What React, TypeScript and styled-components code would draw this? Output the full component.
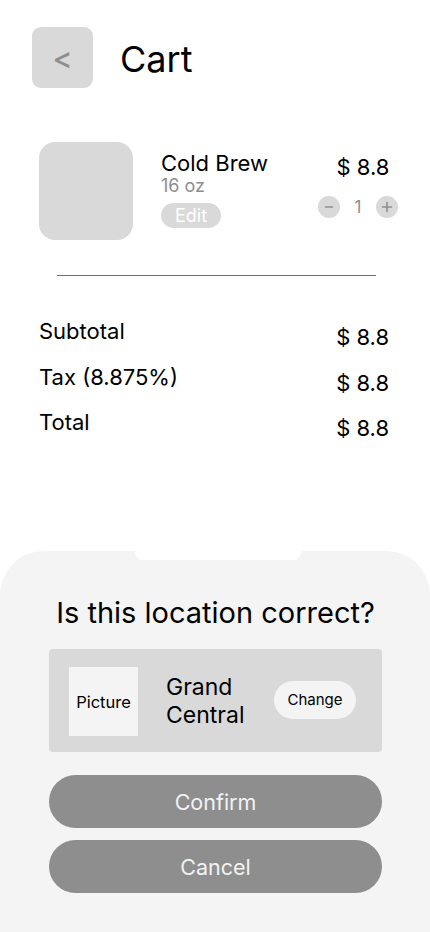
import React from "react";
import styled, { createGlobalStyle } from "styled-components";

const Global = createGlobalStyle`
  html, body { margin: 0; padding: 0; background: #ffffff; }
  body { font-family: Inter, "Noto Sans", sans-serif; color: #000; }
  * { box-sizing: border-box; }
`;

const Page = styled.div`
  width: 430px;
  height: 932px;
  display: flex;
  flex-direction: column;
  background: #ffffff;
  overflow: hidden;
`;

const Header = styled.header`
  display: flex;
  align-items: center;
  gap: 27px;
  padding: 27px 0 0 32px;
`;

const BackButton = styled.button`
  width: 61px;
  height: 61px;
  border: none;
  border-radius: 9px;
  background: #d9d9d9;
  color: #8e8e8e;
  font-family: Inter, sans-serif;
  font-size: 30px;
  font-weight: 500;
  line-height: 1;
  display: flex;
  align-items: center;
  justify-content: center;
  padding: 1px 0 0 0;
`;

const Title = styled.h1`
  margin: 0;
  font-size: 36px;
  font-weight: 400;
  line-height: 42px;
  padding-top: 2px;
`;

const ProductRow = styled.section`
  display: flex;
  margin-top: 54px;
  padding-left: 39px;
  padding-right: 32px;
`;

const Thumb = styled.div`
  width: 94px;
  height: 98px;
  border-radius: 16px;
  background: #d9d9d9;
  flex-shrink: 0;
`;

const Info = styled.div`
  display: flex;
  flex-direction: column;
  align-items: flex-start;
  margin-left: 28px;
  padding-top: 8px;
  flex: 1;
`;

const ProductName = styled.div`
  font-size: 22px;
  line-height: 26px;
`;

const Size = styled.div`
  font-size: 18px;
  line-height: 20px;
  color: #8e8e8e;
`;

const EditPill = styled.button`
  margin-top: 7px;
  height: 25px;
  padding: 0 14px;
  border: none;
  border-radius: 13px;
  background: #d9d9d9;
  color: #ffffff;
  font-family: Inter, sans-serif;
  font-size: 18px;
  line-height: 25px;
`;

const PriceCol = styled.div`
  display: flex;
  flex-direction: column;
  align-items: center;
  padding-top: 11px;
`;

const Price = styled.div`
  font-size: 22px;
  line-height: 28px;
  margin-left: 10px;
`;

const Stepper = styled.div`
  display: flex;
  align-items: center;
  margin-top: 15px;
`;

const StepBtn = styled.span`
  width: 22px;
  height: 22px;
  border-radius: 50%;
  background: #d9d9d9;
  display: flex;
  align-items: center;
  justify-content: center;
`;

const Qty = styled.span`
  width: 36px;
  text-align: center;
  font-size: 17px;
  color: #8e8e8e;
  line-height: 22px;
`;

const Divider = styled.hr`
  margin: 35px 54px 0 57px;
  border: none;
  border-top: 1px solid #6e6e6e;
  height: 0;
`;

const Summary = styled.section`
  display: flex;
  flex-direction: column;
  margin-top: 42px;
  padding: 0 41px 0 39px;
`;

const SumRow = styled.div`
  display: flex;
  justify-content: space-between;
  align-items: flex-start;
  height: 45.5px;
`;

const SumLabel = styled.span`
  font-size: 22px;
  line-height: 26px;
`;

const SumValue = styled.span`
  font-size: 22px;
  line-height: 28px;
  padding-top: 5px;
`;

const Sheet = styled.section`
  margin-top: auto;
  height: 381px;
  position: relative;
  background: #f4f4f4;
  border-radius: 44px 44px 0 0;
  display: flex;
  flex-direction: column;
  padding: 45px 48px 0 49px;
`;

const Notch = styled.div`
  position: absolute;
  top: 0;
  left: 135px;
  width: 166px;
  height: 9px;
  background: #ffffff;
  border-radius: 0 0 8px 8px;
`;

const SheetTitle = styled.h2`
  margin: 0;
  text-align: center;
  font-size: 29px;
  font-weight: 400;
  line-height: 34px;
`;

const LocationCard = styled.div`
  margin-top: 19px;
  height: 103px;
  border-radius: 4px;
  background: #d9d9d9;
  display: flex;
  align-items: center;
  padding: 2px 26px 0 20px;
`;

const Picture = styled.div`
  width: 69px;
  height: 69px;
  background: #f4f4f4;
  display: flex;
  align-items: center;
  justify-content: center;
  font-size: 16.5px;
  flex-shrink: 0;
`;

const PlaceName = styled.div`
  flex: 1;
  margin-left: 28px;
  font-size: 23px;
  line-height: 28px;
  margin-top: -2px;
`;

const ChangeBtn = styled.button`
  width: 82px;
  height: 38px;
  border: none;
  border-radius: 19px;
  background: #f4f4f4;
  font-family: Inter, sans-serif;
  font-size: 15px;
  color: #000;
  padding: 0;
  margin-top: -4px;
`;

const Actions = styled.div`
  display: flex;
  flex-direction: column;
  gap: 12px;
  margin-top: 23px;
`;

const ActionBtn = styled.button`
  height: 53px;
  border: none;
  border-radius: 27px;
  background: #8e8e8e;
  color: #f2f2f2;
  font-family: Inter, sans-serif;
  font-size: 21.5px;
  padding: 0;
`;

const Minus = () => (
  <svg width="10" height="10" viewBox="0 0 10 10">
    <line x1="1.5" y1="5" x2="8.5" y2="5" stroke="#8e8e8e" strokeWidth="1.6" strokeLinecap="round" />
  </svg>
);

const Plus = () => (
  <svg width="12" height="12" viewBox="0 0 12 12">
    <line x1="1.5" y1="6" x2="10.5" y2="6" stroke="#8e8e8e" strokeWidth="1.6" strokeLinecap="round" />
    <line x1="6" y1="1.5" x2="6" y2="10.5" stroke="#8e8e8e" strokeWidth="1.6" strokeLinecap="round" />
  </svg>
);

const rows = [
  { label: "Subtotal", value: "$ 8.8" },
  { label: "Tax (8.875%)", value: "$ 8.8" },
  { label: "Total", value: "$ 8.8" },
];

export default function App() {
  return (
    <>
      <Global />
      <Page>
        <Header>
          <BackButton aria-label="Back">&lt;</BackButton>
          <Title>Cart</Title>
        </Header>

        <ProductRow>
          <Thumb />
          <Info>
            <ProductName>Cold Brew</ProductName>
            <Size>16 oz</Size>
            <EditPill>Edit</EditPill>
          </Info>
          <PriceCol>
            <Price>$ 8.8</Price>
            <Stepper>
              <StepBtn><Minus /></StepBtn>
              <Qty>1</Qty>
              <StepBtn><Plus /></StepBtn>
            </Stepper>
          </PriceCol>
        </ProductRow>

        <Divider />

        <Summary>
          {rows.map((r) => (
            <SumRow key={r.label}>
              <SumLabel>{r.label}</SumLabel>
              <SumValue>{r.value}</SumValue>
            </SumRow>
          ))}
        </Summary>

        <Sheet>
          <Notch />
          <SheetTitle>Is this location correct?</SheetTitle>
          <LocationCard>
            <Picture>Picture</Picture>
            <PlaceName>Grand Central</PlaceName>
            <ChangeBtn>Change</ChangeBtn>
          </LocationCard>
          <Actions>
            <ActionBtn>Confirm</ActionBtn>
            <ActionBtn>Cancel</ActionBtn>
          </Actions>
        </Sheet>
      </Page>
    </>
  );
}
